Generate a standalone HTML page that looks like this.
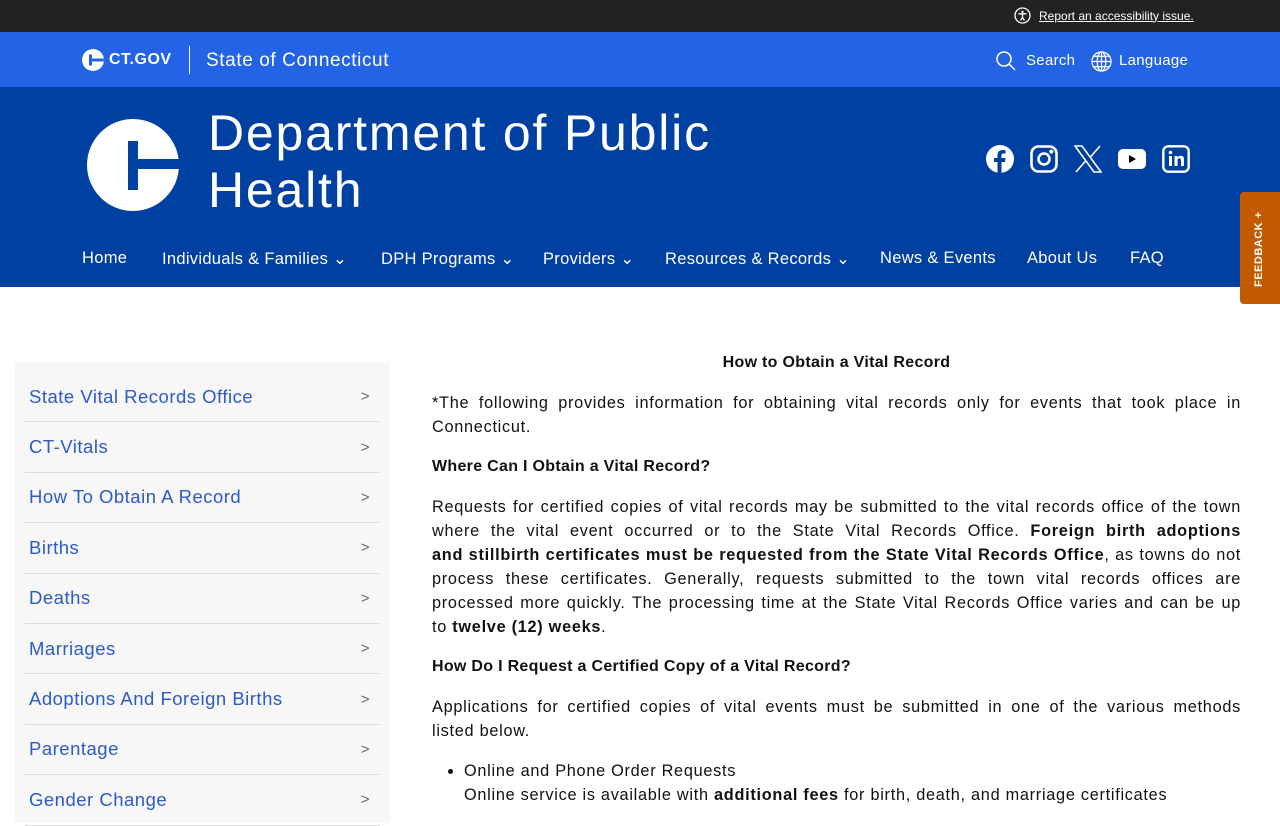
<!DOCTYPE html>
<html><head><meta charset="utf-8"><style>
*{margin:0;padding:0;box-sizing:border-box}
body{width:1280px;height:800px;overflow:hidden;font-family:"Liberation Sans",sans-serif;background:#fff;position:relative}
.top{height:32px;background:#222;color:#fff;font-size:12px;position:relative}
.top .r{position:absolute;left:1014px;top:7px;display:flex;align-items:center;gap:8px}
.top a{color:#fff;text-decoration:underline}
.blue{height:55px;background:#2264e5;color:#fff;position:relative}
.main{height:200px;background:#0040a0;color:#fff;position:relative}
.nav span{position:absolute;top:162px;font-size:16.5px;letter-spacing:.3px;white-space:nowrap}
.side{position:absolute;left:15px;top:363px;width:375px;height:460px;background:#f7f7f7;padding:9px 10px 0}
.side div{height:50.4px;border-bottom:1px solid #ddd;display:flex;align-items:center;justify-content:space-between;padding:0 10px 0 4px;color:#2c5bc7;font-size:18.5px;letter-spacing:.5px}
.side div i{font-style:normal;color:#666;font-size:15px}
.c{position:absolute;left:432px;top:351px;width:809px;font-size:16.3px;line-height:24px;color:#111;text-align:justify;letter-spacing:.72px}
.c p{margin-bottom:16px}
.c h4{font-size:16px;margin-bottom:16px;letter-spacing:.3px}
.j{display:block;text-align:justify;text-align-last:justify;white-space:nowrap}
.j.l{text-align-last:left}
.fb{position:absolute;left:1240px;top:192px;width:40px;height:112px;background:#c25a00;border-radius:4px 0 0 4px}
.fb span{position:absolute;left:13px;top:95px;transform:rotate(-90deg);transform-origin:0 0;color:#fff;font-weight:bold;font-size:11px;letter-spacing:.5px;white-space:nowrap}
</style></head><body>
<div class="top"><div class="r"><svg width="17" height="17" viewBox="0 0 17 17"><circle cx="8.5" cy="8.5" r="7.5" fill="none" stroke="#fff" stroke-width="1.3"/><circle cx="8.5" cy="4.8" r="1.2" fill="#fff"/><path d="M4.5 6.8h8M8.5 7v3.5L6.5 13.5M8.5 10.5l2 3" stroke="#fff" stroke-width="1.3" fill="none"/></svg><a>Report an accessibility issue.</a></div></div>
<div class="blue">
<svg style="position:absolute;left:82px;top:17px" width="22" height="22" viewBox="0 0 22 22"><circle cx="11" cy="11" r="11" fill="#fff"/><rect x="7" y="5.5" width="3" height="11" fill="#2264e5"/><rect x="10" y="9.5" width="12" height="3" fill="#2264e5"/></svg>
<span style="position:absolute;left:109px;top:19px;font-weight:bold;font-size:16px;letter-spacing:.5px">CT.GOV</span>
<div style="position:absolute;left:189px;top:14px;width:1px;height:28px;background:#fff"></div>
<span style="position:absolute;left:206px;top:18px;font-size:19px;letter-spacing:.6px">State of Connecticut</span>
<svg style="position:absolute;left:995px;top:18px" width="22" height="22" viewBox="0 0 22 22"><circle cx="9" cy="9" r="7" fill="none" stroke="#fff" stroke-width="1.5"/><path d="M14 14l6 6" stroke="#fff" stroke-width="1.5"/></svg>
<span style="position:absolute;left:1026px;top:20px;font-size:15px;letter-spacing:.3px">Search</span>
<svg style="position:absolute;left:1091px;top:19px" width="21" height="21" viewBox="0 0 22 22" fill="none" stroke="#fff" stroke-width="1.3"><circle cx="11" cy="11" r="10"/><ellipse cx="11" cy="11" rx="4.5" ry="10"/><path d="M1 11h20M3 5.5h16M3 16.5h16M11 1v20"/></svg>
<span style="position:absolute;left:1119px;top:20px;font-size:15px;letter-spacing:.3px">Language</span>
</div>
<div class="main">
<svg style="position:absolute;left:87px;top:32px" width="92" height="92" viewBox="0 0 92 92"><circle cx="46" cy="46" r="46" fill="#fff"/><rect x="41" y="22" width="10" height="49" fill="#0040a0"/><rect x="51" y="40" width="41" height="10" fill="#0040a0"/></svg>
<div style="position:absolute;left:208px;top:18px;font-size:50px;line-height:57px;letter-spacing:1.8px">Department of Public<br>Health</div>
<svg style="position:absolute;left:986px;top:58px" width="28" height="28" viewBox="0 0 28 28"><circle cx="14" cy="14" r="14" fill="#fff"/><path d="M15.5 28V17h3.5l.5-4h-4v-2.5c0-1.2.4-2 2-2h2V5.2c-.4 0-1.6-.2-3-.2-3 0-5 1.8-5 5.2V13H8v4h3.5v11z" fill="#0040a0"/></svg>
<svg style="position:absolute;left:1030px;top:58px" width="28" height="28" viewBox="0 0 28 28" fill="none" stroke="#fff" stroke-width="2.6"><rect x="1.5" y="1.5" width="25" height="25" rx="7"/><circle cx="14" cy="14" r="5.5"/><circle cx="21.3" cy="6.7" r=".8" fill="#fff"/></svg>
<svg style="position:absolute;left:1074px;top:58px" width="28" height="28" viewBox="0 0 28 28" fill="none" stroke="#fff" stroke-width="1.6"><path d="M1 1h7l19 26h-7zM26 1L16 12.5M2 27l10-11.5"/></svg>
<svg style="position:absolute;left:1118px;top:62px" width="28" height="20" viewBox="0 0 28 20"><rect width="28" height="20" rx="5" fill="#fff"/><path d="M11 6v8l7-4z" fill="#000"/></svg>
<svg style="position:absolute;left:1162px;top:58px" width="28" height="28" viewBox="0 0 28 28"><rect x="1.3" y="1.3" width="25.4" height="25.4" rx="5" fill="none" stroke="#fff" stroke-width="2.4"/><rect x="7" y="11" width="3" height="10" fill="#fff"/><circle cx="8.5" cy="7.5" r="1.8" fill="#fff"/><path d="M12.5 11h3v1.5c.7-1.2 2-1.8 3.3-1.8 2.5 0 3.2 1.6 3.2 4V21h-3v-5.5c0-1.3-.4-2.2-1.6-2.2s-1.9.9-1.9 2.2V21h-3z" fill="#fff"/></svg>
<div class="nav"><span style="left:82px">Home</span><span style="left:162px">Individuals &amp; Families ⌄</span><span style="left:381px">DPH Programs ⌄</span><span style="left:543px">Providers ⌄</span><span style="left:665px">Resources &amp; Records ⌄</span><span style="left:880px">News &amp; Events</span><span style="left:1027px">About Us</span><span style="left:1130px">FAQ</span></div>
</div>
<div class="fb"><span>FEEDBACK +</span></div>
<div class="side">
<div>State Vital Records Office<i>&gt;</i></div><div>CT-Vitals<i>&gt;</i></div><div>How To Obtain A Record<i>&gt;</i></div><div>Births<i>&gt;</i></div><div>Deaths<i>&gt;</i></div><div>Marriages<i>&gt;</i></div><div>Adoptions And Foreign Births<i>&gt;</i></div><div>Parentage<i>&gt;</i></div><div>Gender Change<i>&gt;</i></div>
</div>
<div class="c">
<h4 style="text-align:center">How to Obtain a Vital Record</h4>
<p><span class="j">*The following provides information for obtaining vital records only for events that took place in</span><span class="j l">Connecticut.</span></p>
<h4>Where Can I Obtain a Vital Record?</h4>
<p><span class="j">Requests for certified copies of vital records may be submitted to the vital records office of the town</span><span class="j">where the vital event occurred or to the State Vital Records Office. <b>Foreign birth adoptions</b></span><span class="j"><b>and stillbirth certificates must be requested from the State Vital Records Office</b>, as towns do not</span><span class="j">process these certificates. Generally, requests submitted to the town vital records offices are</span><span class="j">processed more quickly. The processing time at the State Vital Records Office varies and can be up</span><span class="j l">to <b>twelve (12) weeks</b>.</span></p>
<h4>How Do I Request a Certified Copy of a Vital Record?</h4>
<p><span class="j">Applications for certified copies of vital events must be submitted in one of the various methods</span><span class="j l">listed below.</span></p>
<ul style="margin-left:32px;text-align:left"><li>Online and Phone Order Requests<br>Online service is available with <b>additional fees</b> for birth, death, and marriage certificates</li></ul>
</div>
</body></html>
